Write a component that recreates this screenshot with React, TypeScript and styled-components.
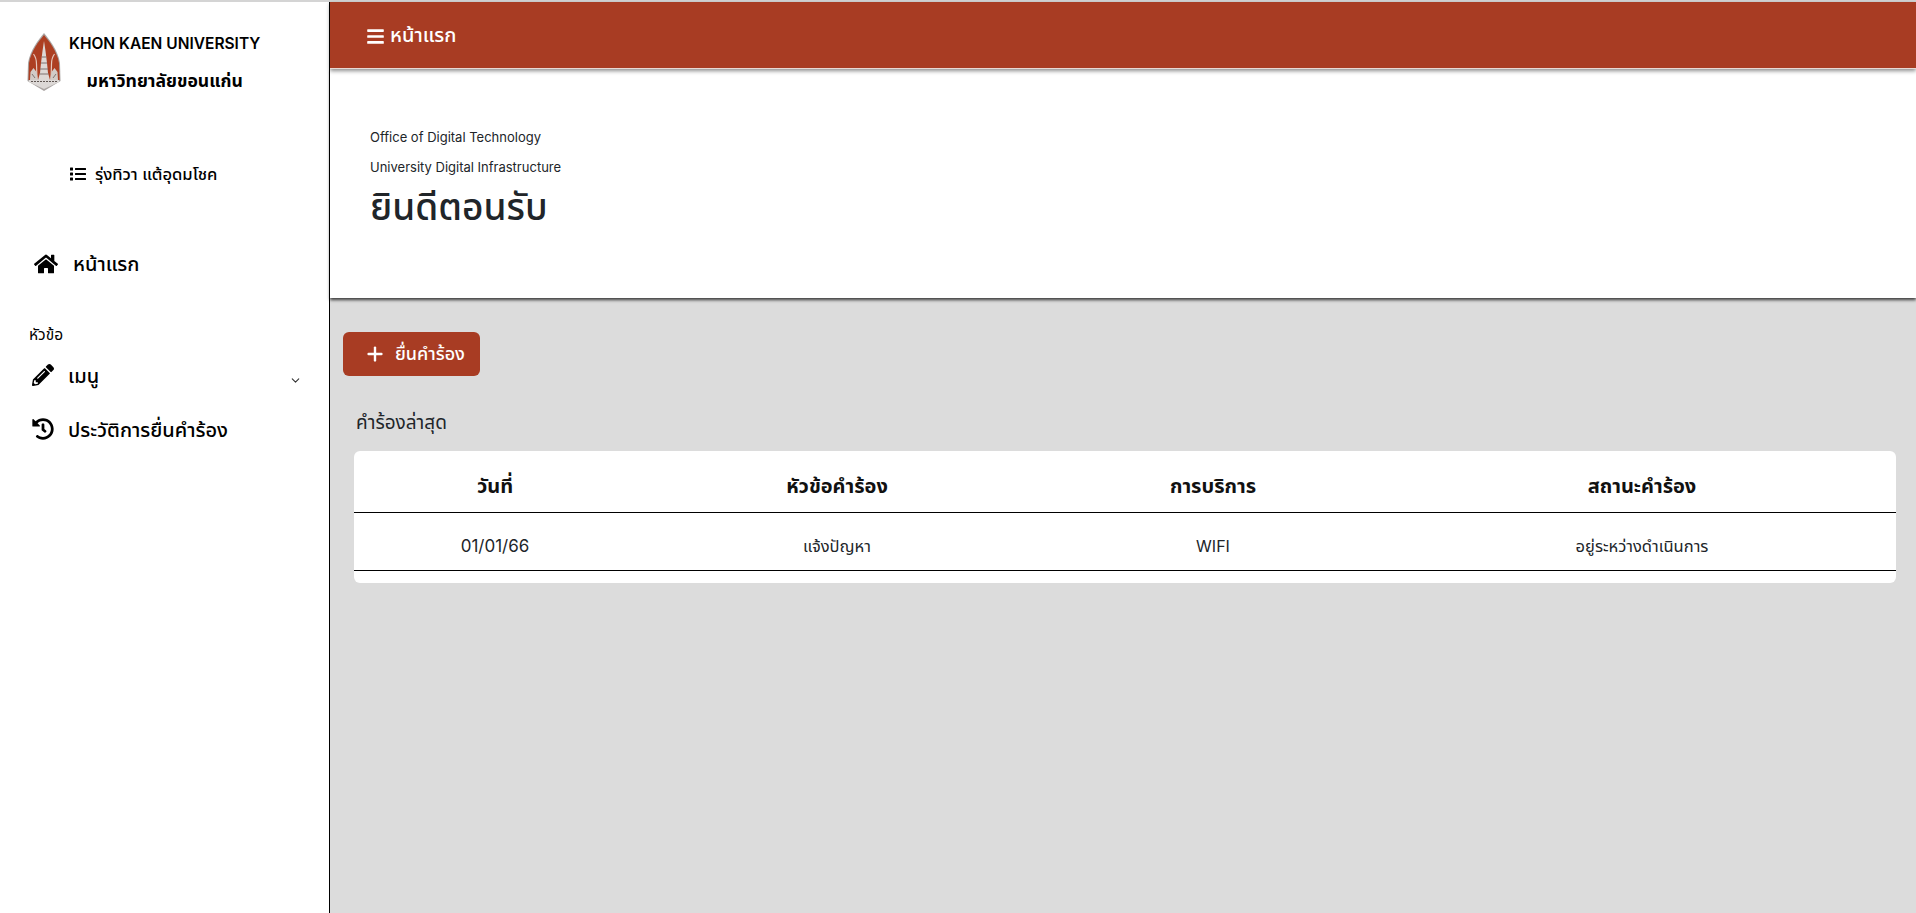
import React from "react";
import styled, { createGlobalStyle } from "styled-components";
import { FaHome, FaPencilAlt, FaHistory, FaList, FaBars } from "react-icons/fa";
import { FiChevronDown, FiPlus } from "react-icons/fi";

const FONT = `Inter, "Noto Sans", "Noto Sans Thai", "Liberation Sans", sans-serif`;

const Global = createGlobalStyle`
  html, body { margin: 0; padding: 0; height: 100%; }
  body { font-family: ${FONT}; background: #dcdcdc; color: #000; overflow: hidden; }
  * { box-sizing: border-box; }
`;

const Page = styled.div`
  display: flex;
  width: 1916px;
  height: 913px;
  border-top: 2px solid #d4d4d4;
`;

const Sidebar = styled.aside`
  width: 330px;
  flex: none;
  background: #fff;
  border-right: 1px solid #000;
  display: flex;
  flex-direction: column;
`;

const Brand = styled.div`
  display: flex;
  padding: 31px 0 0 27px;
  height: 110px;
`;

const BrandText = styled.div`
  margin-left: 8px;
  display: flex;
  flex-direction: column;
  align-items: center;
`;

const BrandEn = styled.div`
  font-size: 15.5px;
  font-weight: 600;
  line-height: 22px;
  white-space: nowrap;
`;

const BrandTh = styled.div`
  font-size: 17.6px;
  font-weight: 700;
  line-height: 22px;
  margin-top: 15px;
`;

const UserRow = styled.div`
  display: flex;
  align-items: center;
  gap: 9px;
  margin: 52px 0 0 70px;
  font-size: 16.6px;
  font-weight: 500;
  line-height: 20px;
`;

const HomeRow = styled.div`
  display: flex;
  align-items: center;
  gap: 15px;
  margin: 67px 0 0 34px;
  font-size: 20px;
  font-weight: 500;
  line-height: 26px;
`;

const SectionLabel = styled.div`
  margin: 49px 0 0 29px;
  font-size: 15.5px;
  line-height: 18px;
`;

const MenuRow = styled.div<{ $top: number }>`
  display: flex;
  align-items: center;
  gap: 14px;
  margin: ${(p) => p.$top}px 0 0 32px;
  padding-right: 27px;
  font-size: 20px;
  font-weight: 500;
  line-height: 26px;

  > svg {
    margin-top: -2px;
  }
`;

const Caret = styled.span`
  margin-left: auto;
  display: flex;
  color: #333;
  padding-top: 8px;
`;

const Main = styled.main`
  flex: 1;
  min-width: 0;
  display: flex;
  flex-direction: column;
`;

const TopBar = styled.header`
  height: 67px;
  flex: none;
  background: #a83c23;
  color: #fff;
  display: flex;
  align-items: center;
  gap: 5px;
  padding: 2px 0 0 36px;
  font-size: 20px;
  font-weight: 500;
  box-shadow: 0 2px 4px rgba(0, 0, 0, 0.45);
  border-bottom: 1px solid #e9d9d5;
  position: relative;
  z-index: 2;
`;

const Hero = styled.section`
  height: 229px;
  flex: none;
  background: #fff;
  padding: 59px 0 0 40px;
  color: #212529;
  box-shadow: 0 2px 3px rgba(0, 0, 0, 0.75);
  position: relative;
  z-index: 1;
`;

const HeroLine = styled.p`
  margin: 0 0 12px;
  font-size: 13px;
  line-height: 18px;
`;

const HeroTitle = styled.h1`
  margin: -6px 0 0;
  font-size: 37px;
  font-weight: 500;
  line-height: 50px;
`;

const Content = styled.div`
  padding: 34px 20px 0 13px;
`;

const AddButton = styled.button`
  width: 137px;
  height: 44px;
  display: flex;
  align-items: center;
  gap: 9px;
  padding: 0 0 0 21px;
  border: none;
  border-radius: 6px;
  background: #a83c23;
  color: #fff;
  font-family: inherit;
  font-size: 18px;
  font-weight: 500;
`;

const SectionTitle = styled.h2`
  margin: 35px 0 0 13px;
  font-size: 19px;
  font-weight: 400;
  line-height: 24px;
  color: #212529;
`;

const Card = styled.div`
  margin: 16px 0 0 11px;
  height: 132px;
  background: #fff;
  border-radius: 6px;
`;

const Table = styled.table`
  width: 100%;
  table-layout: fixed;
  border-collapse: collapse;
  color: #212529;
`;

const Th = styled.th<{ $w: number }>`
  width: ${(p) => p.$w}px;
  height: 61px;
  padding: 11px 0 0;
  border-bottom: 1px solid #000;
  font-size: 20px;
  font-weight: 700;
  text-align: center;
  color: #111;
`;

const Td = styled.td<{ $size: number }>`
  height: 58px;
  padding: 10px 0 0;
  border-bottom: 1px solid #000;
  font-size: ${(p) => p.$size}px;
  text-align: center;
`;

const Logo = () => (
  <svg width="34" height="58" viewBox="0 0 34 58" style={{ flex: "none" }}>
    <path d="M17 0 C22 6 31 17 33 30 L33.5 48 L17 58 L0.5 48 L1 30 C3 17 12 6 17 0Z" fill="#aaa5a3" />
    <path d="M17 2 C22 8 30 18 32 30 L32.5 47 L1.5 47 L2 30 C4 18 12 8 17 2Z" fill="#ad3f22" />
    <path d="M2 47 L32 47 L32 49 L17 56 L2 49Z" fill="#dcd8d6" />
    <path d="M10 47 L9.5 31 C9.5 26 8 23 6.5 21 M24 47 L24.5 31 C24.5 26 26 23 27.5 21" stroke="#e6c8bd" strokeWidth="1.2" fill="none" />
    <path d="M17 8 L18.5 18 L20 30 L21 40 L23 47 L11 47 L13 40 L14 30 L15.5 18Z" fill="#ded9d6" />
    <path d="M14.8 24 H19.2 M14 30 H20 M13 36 H21 M12.5 41 H21.5" stroke="#7f7370" strokeWidth="1" />
    <path d="M3 47 L3.5 39 L6.5 35 L9.5 39 L11 47Z M31 47 L30.5 39 L27.5 35 L24.5 39 L23 47Z" fill="#d2cbc7" />
    <path d="M5 41 L8 45 M29 41 L26 45" stroke="#7f7370" strokeWidth="1" />
    <path d="M4 48.5 H30" stroke="#5f5652" strokeWidth="1" strokeDasharray="2 1" />
  </svg>
);

const rows = [{ date: "01/01/66", topic: "แจ้งปัญหา", service: "WIFI", status: "อยู่ระหว่างดำเนินการ" }];

export default function App() {
  return (
    <>
      <Global />
      <Page>
        <Sidebar>
          <Brand>
            <Logo />
            <BrandText>
              <BrandEn>KHON KAEN UNIVERSITY</BrandEn>
              <BrandTh>มหาวิทยาลัยขอนแก่น</BrandTh>
            </BrandText>
          </Brand>
          <UserRow>
            <FaList size={16} />
            รุ่งทิวา แต้อุดมโชค
          </UserRow>
          <HomeRow>
            <FaHome size={24} />
            หน้าแรก
          </HomeRow>
          <SectionLabel>หัวข้อ</SectionLabel>
          <MenuRow $top={19}>
            <FaPencilAlt size={22} />
            เมนู
            <Caret>
              <FiChevronDown size={13} />
            </Caret>
          </MenuRow>
          <MenuRow $top={28}>
            <FaHistory size={22} />
            ประวัติการยื่นคำร้อง
          </MenuRow>
        </Sidebar>
        <Main>
          <TopBar>
            <FaBars size={19} />
            หน้าแรก
          </TopBar>
          <Hero>
            <HeroLine>Office of Digital Technology</HeroLine>
            <HeroLine>University Digital Infrastructure</HeroLine>
            <HeroTitle>ยินดีตอนรับ</HeroTitle>
          </Hero>
          <Content>
            <AddButton>
              <FiPlus size={22} strokeWidth={2.6} />
              ยื่นคำร้อง
            </AddButton>
            <SectionTitle>คำร้องล่าสุด</SectionTitle>
            <Card>
              <Table>
                <thead>
                  <tr>
                    <Th $w={282}>วันที่</Th>
                    <Th $w={402}>หัวข้อคำร้อง</Th>
                    <Th $w={350}>การบริการ</Th>
                    <Th $w={508}>สถานะคำร้อง</Th>
                  </tr>
                </thead>
                <tbody>
                  {rows.map((r) => (
                    <tr key={r.date}>
                      <Td $size={17}>{r.date}</Td>
                      <Td $size={16.5}>{r.topic}</Td>
                      <Td $size={16}>{r.service}</Td>
                      <Td $size={16.5}>{r.status}</Td>
                    </tr>
                  ))}
                </tbody>
              </Table>
            </Card>
          </Content>
        </Main>
      </Page>
    </>
  );
}
